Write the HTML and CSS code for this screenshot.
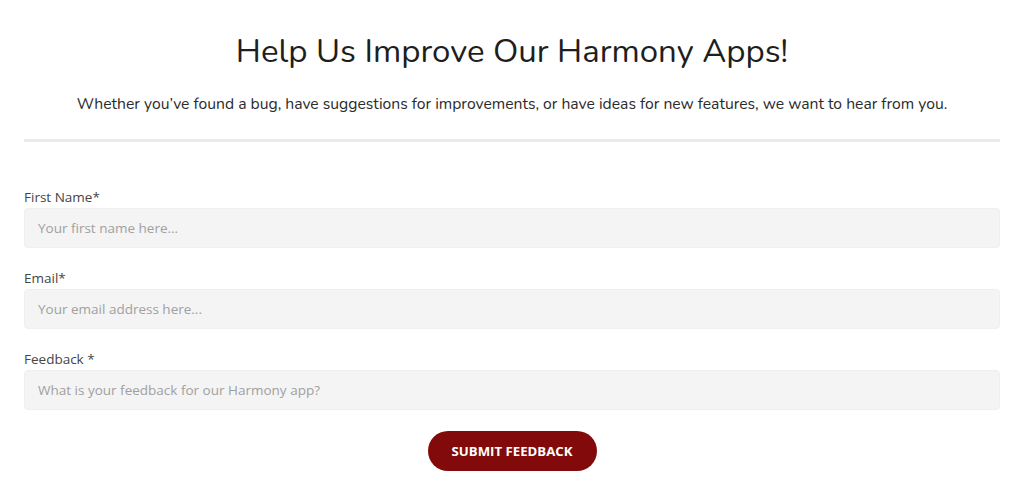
FILE: index.html
```html
<!DOCTYPE html>
<html>
<head>
<meta charset="utf-8">
<link rel="stylesheet" href="styles.css">
</head>
<body>
<main class="page">
  <header class="intro">
    <h1 class="title">Help Us Improve Our Harmony Apps!</h1>
    <p class="lead">Whether you’ve found a bug, have suggestions for improvements, or have ideas for new features, we want to hear from you.</p>
  </header>
  <hr class="divider">
  <form class="form">
    <div class="field">
      <label class="label" for="fn">First Name*</label>
      <input class="input" id="fn" type="text" placeholder="Your first name here...">
    </div>
    <div class="field">
      <label class="label" for="em">Email*</label>
      <input class="input" id="em" type="email" placeholder="Your email address here...">
    </div>
    <div class="field">
      <label class="label" for="fb">Feedback *</label>
      <input class="input" id="fb" type="text" placeholder="What is your feedback for our Harmony app?">
    </div>
    <div class="actions">
      <button class="submit" type="button">SUBMIT FEEDBACK</button>
    </div>
  </form>
</main>
</body>
</html>
```
FILE: styles.css
```css
html, body {
  margin: 0;
  padding: 0;
  background: #ffffff;
}
.page {
  width: 976px;
  margin: 0 auto;
  padding-top: 30px;
}
.intro {
  text-align: center;
}
.title {
  margin: 0;
  font-family: "Nunito", "Lato", sans-serif;
  font-weight: 400;
  font-size: 33px;
  line-height: 44px;
  color: #1e1e1e;
}
.lead {
  margin: 18px 0 0;
  font-family: "Nunito", "Lato", sans-serif;
  font-size: 15.7px;
  line-height: 24px;
  color: #2b2b2b;
}
.divider {
  border: 0;
  height: 3px;
  background: #ebebeb;
  margin: 23px 0 0;
}
.form {
  display: flex;
  flex-direction: column;
  gap: 20px;
  padding-top: 45px;
}
.field {
  display: flex;
  flex-direction: column;
}
.label {
  font-family: "Open Sans", sans-serif;
  font-size: 13.5px;
  line-height: 21px;
  color: #454545;
}
.input {
  box-sizing: border-box;
  height: 40px;
  width: 100%;
  margin: 0;
  padding: 0 13px;
  border: 1px solid #efefef;
  border-radius: 4px;
  background: #f4f4f4;
  font-family: "Open Sans", sans-serif;
  font-size: 13.5px;
  color: #333;
  outline: none;
}
.input::placeholder {
  color: #a0a0a0;
}
.actions {
  display: flex;
  justify-content: center;
  padding-top: 1px;
}
.submit {
  height: 40px;
  width: 169px;
  border: 0;
  border-radius: 20px;
  background: #820a0a;
  color: #ffffff;
  font-family: "Open Sans", sans-serif;
  font-weight: 700;
  font-size: 13.2px;
  cursor: pointer;
}
```
